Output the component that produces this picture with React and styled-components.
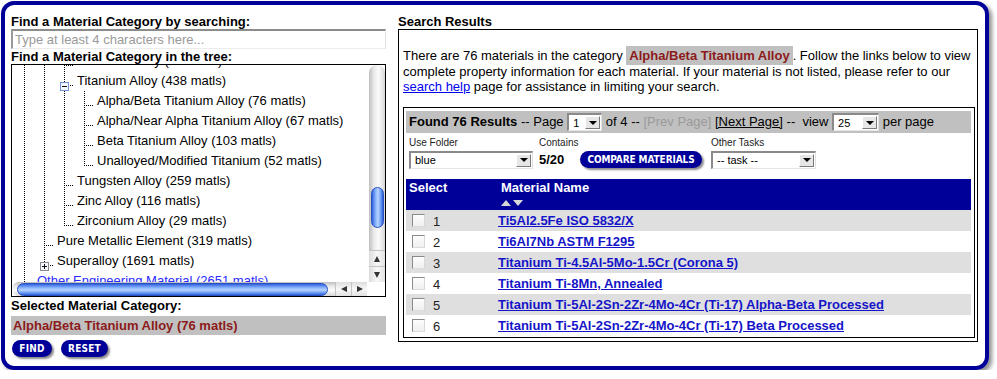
import styled, { createGlobalStyle } from "styled-components";

const NAVY = "#000099";
const MAROON = "#8c1a1a";
const LINK = "#1414c8";

const GlobalStyle = createGlobalStyle`
  html, body { margin: 0; padding: 0; background: #fff; }
  body {
    font-family: "Liberation Sans", Arial, Helvetica, sans-serif;
    font-size: 13px;
    color: #000;
  }
`;

// the tree is scrolled, so the first row is only partly visible
const treeRows = [
  { guides: [1, 1], text: "Tantalum Alloy (40 matls)" },
  { guides: [1, 1], text: "Titanium Alloy (438 matls)", icon: "minus" },
  { guides: [1, 1, 1], text: "Alpha/Beta Titanium Alloy (76 matls)" },
  { guides: [1, 1, 1], text: "Alpha/Near Alpha Titanium Alloy (67 matls)" },
  { guides: [1, 1, 1], text: "Beta Titanium Alloy (103 matls)" },
  { guides: [1, 1, 1], text: "Unalloyed/Modified Titanium (52 matls)", last: true },
  { guides: [1, 1], text: "Tungsten Alloy (259 matls)" },
  { guides: [1, 1], text: "Zinc Alloy (116 matls)" },
  { guides: [1, 1], text: "Zirconium Alloy (29 matls)", last: true },
  { guides: [1], text: "Pure Metallic Element (319 matls)" },
  { guides: [1], text: "Superalloy (1691 matls)", icon: "plus", last: true },
  { guides: [], text: "Other Engineering Material (2651 matls)", icon: "minus", link: true },
  { guides: [1], text: "Ceramic (1720 matls)", icon: "plus" },
];

const results = [
  "Ti5Al2.5Fe ISO 5832/X",
  "Ti6Al7Nb ASTM F1295",
  "Titanium Ti-4.5Al-5Mo-1.5Cr (Corona 5)",
  "Titanium Ti-8Mn, Annealed",
  "Titanium Ti-5Al-2Sn-2Zr-4Mo-4Cr (Ti-17) Alpha-Beta Processed",
  "Titanium Ti-5Al-2Sn-2Zr-4Mo-4Cr (Ti-17) Beta Processed",
];

const dotsV = "repeating-linear-gradient(to bottom, #000 0 1px, transparent 1px 2px)";
const dotsH = "repeating-linear-gradient(to right, #000 0 1px, transparent 1px 2px)";

const Toggle = ({ plus }) => (
  <svg width="9" height="9" viewBox="0 0 9 9" style={{ display: "block" }}>
    <rect x="0.5" y="0.5" width="8" height="8" fill="#f4f7fd" stroke={plus ? "#8a8a8a" : "#6f93d6"} />
    <path d="M2 4.5h5" stroke="#111" />
    {plus && <path d="M4.5 2v5" stroke="#111" />}
  </svg>
);

export default function App() {
  return (
    <>
      <GlobalStyle />
      <Frame>
        <LeftCol>
          <Heading>Find a Material Category by searching:</Heading>
          <SearchInput placeholder="Type at least 4 characters here..." />
          <Heading>Find a Material Category in the tree:</Heading>
          <TreeBox>
            <TreeView>
              <TreeList>
                {treeRows.map((row, i) => (
                  <TreeRow key={i}>
                    {row.guides.map((g, j) => (
                      <Guide key={j} $line={g} />
                    ))}
                    <Branch $last={row.last}>
                      {row.icon && <Toggle plus={row.icon === "plus"} />}
                    </Branch>
                    <TreeLabel $link={row.link}>{row.text}</TreeLabel>
                  </TreeRow>
                ))}
              </TreeList>
            </TreeView>
            <VScroll>
              <VTrack>
                <VThumb $offset={122} />
              </VTrack>
              <ArrowBtn $dir="up" />
              <ArrowBtn $dir="down" />
            </VScroll>
            <HScroll>
              <HTrack>
                <HThumb />
              </HTrack>
              <ArrowBtn $dir="left" />
              <ArrowBtn $dir="right" />
            </HScroll>
            <Corner />
          </TreeBox>
          <Heading $top={1}>Selected Material Category:</Heading>
          <SelectedBar>Alpha/Beta Titanium Alloy (76 matls)</SelectedBar>
          <ButtonRow>
            <PillButton $w={40}>FIND</PillButton>
            <PillButton $w={47}>RESET</PillButton>
          </ButtonRow>
        </LeftCol>

        <RightCol>
          <Heading>Search Results</Heading>
          <ResultsBox>
            <Intro>
              There are 76 materials in the category <Highlight>Alpha/Beta Titanium Alloy</Highlight>. Follow the
              links below to view complete property information for each material. If your material is not listed,
              please refer to our <HelpLink href="#">search help</HelpLink> page for assistance in limiting your
              search.
            </Intro>
            <ResultTable>
              <PagerBar>
                <b>Found 76 Results</b> -- Page{" "}
                <Dropdown $w={35}>
                  1<DropBtn />
                </Dropdown>{" "}
                of 4 -- <Muted>[Prev Page]</Muted> <PageLink>[Next Page]</PageLink> --&nbsp; view{" "}
                <Dropdown $w={47}>
                  25<DropBtn />
                </Dropdown>{" "}
                per page
              </PagerBar>
              <Tools>
                <ToolGroup $w={130}>
                  <ToolLabel>Use Folder</ToolLabel>
                  <Dropdown $w={124}>
                    blue<DropBtn />
                  </Dropdown>
                </ToolGroup>
                <ToolGroup $w={172}>
                  <ToolLabel>Contains</ToolLabel>
                  <ToolLine>
                    <Count>5/20</Count>
                    <PillButton $w={122} $small>
                      COMPARE MATERIALS
                    </PillButton>
                  </ToolLine>
                </ToolGroup>
                <ToolGroup>
                  <ToolLabel>Other Tasks</ToolLabel>
                  <Dropdown $w={105}>
                    -- task --<DropBtn />
                  </Dropdown>
                </ToolGroup>
              </Tools>
              <HeadRow>
                <HeadCell>Select</HeadCell>
                <HeadCell>
                  Material Name
                  <SortArrows>
                    <SortArrow $up />
                    <SortArrow />
                  </SortArrows>
                </HeadCell>
              </HeadRow>
              {results.map((name, i) => (
                <DataRow key={name} $alt={i % 2 === 0}>
                  <SelectCell>
                    <Checkbox />
                    <RowNum>{i + 1}</RowNum>
                  </SelectCell>
                  <NameLink href="#">{name}</NameLink>
                </DataRow>
              ))}
            </ResultTable>
          </ResultsBox>
        </RightCol>
      </Frame>
    </>
  );
}

const Frame = styled.div`
  box-sizing: border-box;
  margin: 1px 0 0 1px;
  width: 988px;
  height: 369px;
  padding: 9px 6px 0 6px;
  border: 4px solid ${NAVY};
  border-radius: 13px;
  box-shadow: 3px 3px 4px rgba(0, 0, 0, 0.45);
  display: flex;
  gap: 12px;
`;

const LeftCol = styled.div`
  width: 375px;
  display: flex;
  flex-direction: column;
`;

const RightCol = styled.div`
  width: 580px;
  display: flex;
  flex-direction: column;
`;

const Heading = styled.div`
  font-weight: bold;
  font-size: 13px;
  line-height: 15px;
  margin-top: ${(p) => p.$top || 0}px;
  white-space: nowrap;
`;

const SearchInput = styled.input`
  box-sizing: border-box;
  width: 375px;
  height: 20px;
  margin: 0;
  padding: 0 2px;
  border-style: solid;
  border-width: 2px 1px 1px 2px;
  border-color: #8c8c8c #e2e2e2 #ececec #9a9a9a;
  font-family: inherit;
  font-size: 13px;
  outline: none;
  &::placeholder {
    color: #9a9a9a;
  }
`;

const TreeBox = styled.div`
  box-sizing: border-box;
  height: 233px;
  border: 1px solid #000;
  display: grid;
  grid-template-columns: 1fr 16px;
  grid-template-rows: 1fr 14px;
`;

const TreeView = styled.div`
  overflow: hidden;
  padding-left: 2px;
`;

const TreeList = styled.div`
  margin-top: -14px;
`;

const TreeRow = styled.div`
  display: flex;
  height: 20px;
`;

const Guide = styled.span`
  flex: none;
  width: 20px;
  height: 20px;
  background: ${(p) => (p.$line ? `${dotsV} 10px 0 / 1px 100% no-repeat` : "none")};
`;

const Branch = styled.span`
  flex: none;
  box-sizing: border-box;
  width: 20px;
  height: 20px;
  padding: 11px 0 0 6px;
  background: ${dotsH} 10px 14px / 10px 1px no-repeat,
    ${dotsV} 10px 0 / 1px ${(p) => (p.$last ? "15px" : "100%")} no-repeat;
`;

const TreeLabel = styled.span`
  margin-left: 3px;
  line-height: 20px;
  white-space: nowrap;
  color: ${(p) => (p.$link ? "#2b2bff" : "#000")};
`;

const VScroll = styled.div`
  display: flex;
  flex-direction: column;
  background: #fff;
`;

const VTrack = styled.div`
  flex: 1;
  display: flex;
  flex-direction: column;
  align-items: center;
  border-radius: 8px 8px 0 0;
  background: linear-gradient(to right, #bdbdbd, #e9e9e9 30%, #fbfbfb 60%, #d6d6d6);
`;

const VThumb = styled.div`
  margin-top: ${(p) => p.$offset}px;
  box-sizing: border-box;
  width: 13px;
  height: 41px;
  border: 1px solid #2a4fc4;
  border-radius: 7px;
  background: linear-gradient(to right, #2f62dc, #8cb6ff 35%, #b7d4ff 55%, #5b8ef0 85%, #2d5ed8);
`;

const arrowShapes = {
  up: "border-left: 3.5px solid transparent; border-right: 3.5px solid transparent; border-bottom: 6px solid #333;",
  down: "border-left: 3.5px solid transparent; border-right: 3.5px solid transparent; border-top: 6px solid #333;",
  left: "border-top: 3.5px solid transparent; border-bottom: 3.5px solid transparent; border-right: 6px solid #333;",
  right: "border-top: 3.5px solid transparent; border-bottom: 3.5px solid transparent; border-left: 6px solid #333;",
};

const ArrowBtn = styled.div`
  flex: none;
  box-sizing: border-box;
  display: flex;
  align-items: center;
  justify-content: center;
  ${(p) =>
    p.$dir === "up" || p.$dir === "down"
      ? "height: 16px; border-top: 1px solid #c4c4c4; background: linear-gradient(to right, #dcdcdc, #f8f8f8 50%, #e2e2e2);"
      : "width: 16px; border-left: 1px solid #c4c4c4; background: linear-gradient(to bottom, #dcdcdc, #f8f8f8 50%, #e2e2e2);"}
  &::after {
    content: "";
    width: 0;
    height: 0;
    ${(p) => arrowShapes[p.$dir]}
  }
`;

const HScroll = styled.div`
  display: flex;
  padding-right: 2px;
`;

const HTrack = styled.div`
  flex: 1;
  display: flex;
  align-items: center;
  padding-left: 5px;
  border-radius: 7px 0 0 7px;
  background: linear-gradient(to bottom, #bdbdbd, #e9e9e9 30%, #fbfbfb 60%, #d6d6d6);
`;

const HThumb = styled.div`
  box-sizing: border-box;
  width: 311px;
  height: 13px;
  border: 1px solid #2a4fc4;
  border-radius: 7px;
  background: linear-gradient(to bottom, #2f62dc, #8cb6ff 35%, #b7d4ff 55%, #5b8ef0 85%, #2d5ed8);
`;

const Corner = styled.div`
  background: #fff;
`;

const SelectedBar = styled.div`
  margin-top: 3px;
  height: 19px;
  line-height: 19px;
  padding-left: 2px;
  background: #c0c0c0;
  color: ${MAROON};
  font-weight: bold;
  white-space: nowrap;
`;

const ButtonRow = styled.div`
  display: flex;
  gap: 9px;
  margin-top: 5px;
  padding-left: 1px;
`;

const PillButton = styled.button`
  flex: none;
  box-sizing: border-box;
  width: ${(p) => p.$w}px;
  height: 17px;
  margin: 0;
  padding: 0;
  border: none;
  border-radius: 9px;
  background: ${NAVY};
  color: #fff;
  font-family: "DejaVu Sans Condensed", "DejaVu Sans", sans-serif;
  font-weight: bold;
  font-size: 10px;
  letter-spacing: ${(p) => (p.$small ? "-0.1px" : "0.2px")};
  line-height: 17px;
  box-shadow: 2px 2px 2px rgba(0, 0, 0, 0.45);
  cursor: pointer;
`;

const ResultsBox = styled.div`
  box-sizing: border-box;
  height: 313px;
  border: 1px solid #000;
  padding: 0 2px 3px 4px;
`;

const Intro = styled.p`
  margin: 18px 0 12px;
  line-height: 15.5px;
  font-size: 13px;
`;

const Highlight = styled.span`
  background: #c0c0c0;
  color: ${MAROON};
  font-weight: bold;
  padding: 2px 3px;
`;

const HelpLink = styled.a`
  color: #0000ee;
  text-decoration: underline;
`;

const ResultTable = styled.div`
  border: 1px solid #000;
  padding: 3px 3px 1px 2px;
`;

const PagerBar = styled.div`
  height: 22px;
  line-height: 22px;
  padding-left: 3px;
  background: #c0c0c0;
  white-space: nowrap;
`;

const Muted = styled.span`
  color: #9a9a9a;
`;

const PageLink = styled.a`
  color: #000;
  text-decoration: underline;
`;

const Dropdown = styled.span`
  display: inline-flex;
  align-items: center;
  justify-content: space-between;
  vertical-align: middle;
  box-sizing: border-box;
  width: ${(p) => p.$w}px;
  height: 18px;
  padding-left: 4px;
  border-style: solid;
  border-width: 2px 1px 1px 2px;
  border-color: #8a8a8a #e0e0e0 #e6e6e6 #8a8a8a;
  background: #fff;
  font-size: 11px;
  line-height: 14px;
  color: #000;
`;

const DropBtn = styled.span`
  box-sizing: border-box;
  width: 15px;
  height: 13px;
  margin-right: 1px;
  display: flex;
  align-items: center;
  justify-content: center;
  background: #e6e6e6;
  border: 1px solid;
  border-color: #fff #7a7a7a #7a7a7a #fff;
  &::after {
    content: "";
    border-left: 4px solid transparent;
    border-right: 4px solid transparent;
    border-top: 4px solid #000;
  }
`;

const Tools = styled.div`
  display: flex;
  height: 46px;
  box-sizing: border-box;
  padding: 3px 0 0 3px;
`;

const ToolGroup = styled.div`
  flex: none;
  width: ${(p) => (p.$w ? `${p.$w}px` : "auto")};
  display: flex;
  flex-direction: column;
`;

const ToolLabel = styled.div`
  height: 15px;
  line-height: 14px;
  font-size: 10px;
  color: #222;
`;

const ToolLine = styled.div`
  display: flex;
  align-items: center;
  height: 18px;
`;

const Count = styled.span`
  width: 41px;
  font-weight: bold;
`;

const HeadRow = styled.div`
  display: grid;
  grid-template-columns: 92px 1fr;
  height: 31px;
  background: ${NAVY};
  color: #fff;
  font-weight: bold;
`;

const HeadCell = styled.div`
  padding: 1px 0 0 3px;
  line-height: 16px;
`;

const SortArrows = styled.div`
  display: flex;
  gap: 2px;
  margin-top: 4px;
`;

const SortArrow = styled.span`
  width: 0;
  height: 0;
  border-left: 5px solid transparent;
  border-right: 5px solid transparent;
  ${(p) => (p.$up ? "border-bottom: 6px solid #d8d8d8;" : "border-top: 6px solid #d8d8d8;")}
`;

const DataRow = styled.div`
  display: grid;
  grid-template-columns: 92px 1fr;
  align-items: center;
  height: 21px;
  background: ${(p) => (p.$alt ? "#dfdfdf" : "#fff")};
`;

const SelectCell = styled.div`
  display: flex;
  align-items: center;
  padding-left: 6px;
`;

const Checkbox = styled.span`
  box-sizing: border-box;
  width: 13px;
  height: 13px;
  border-style: solid;
  border-width: 1px;
  border-color: #8a8a8a #d8d8d8 #dcdcdc #8a8a8a;
  background: linear-gradient(to bottom, #fdfdfd, #f0f0f0);
`;

const RowNum = styled.span`
  margin: 3px 0 0 8px;
  color: #222;
`;

const NameLink = styled.a`
  color: ${LINK};
  font-weight: bold;
  text-decoration: underline;
  white-space: nowrap;
`;
